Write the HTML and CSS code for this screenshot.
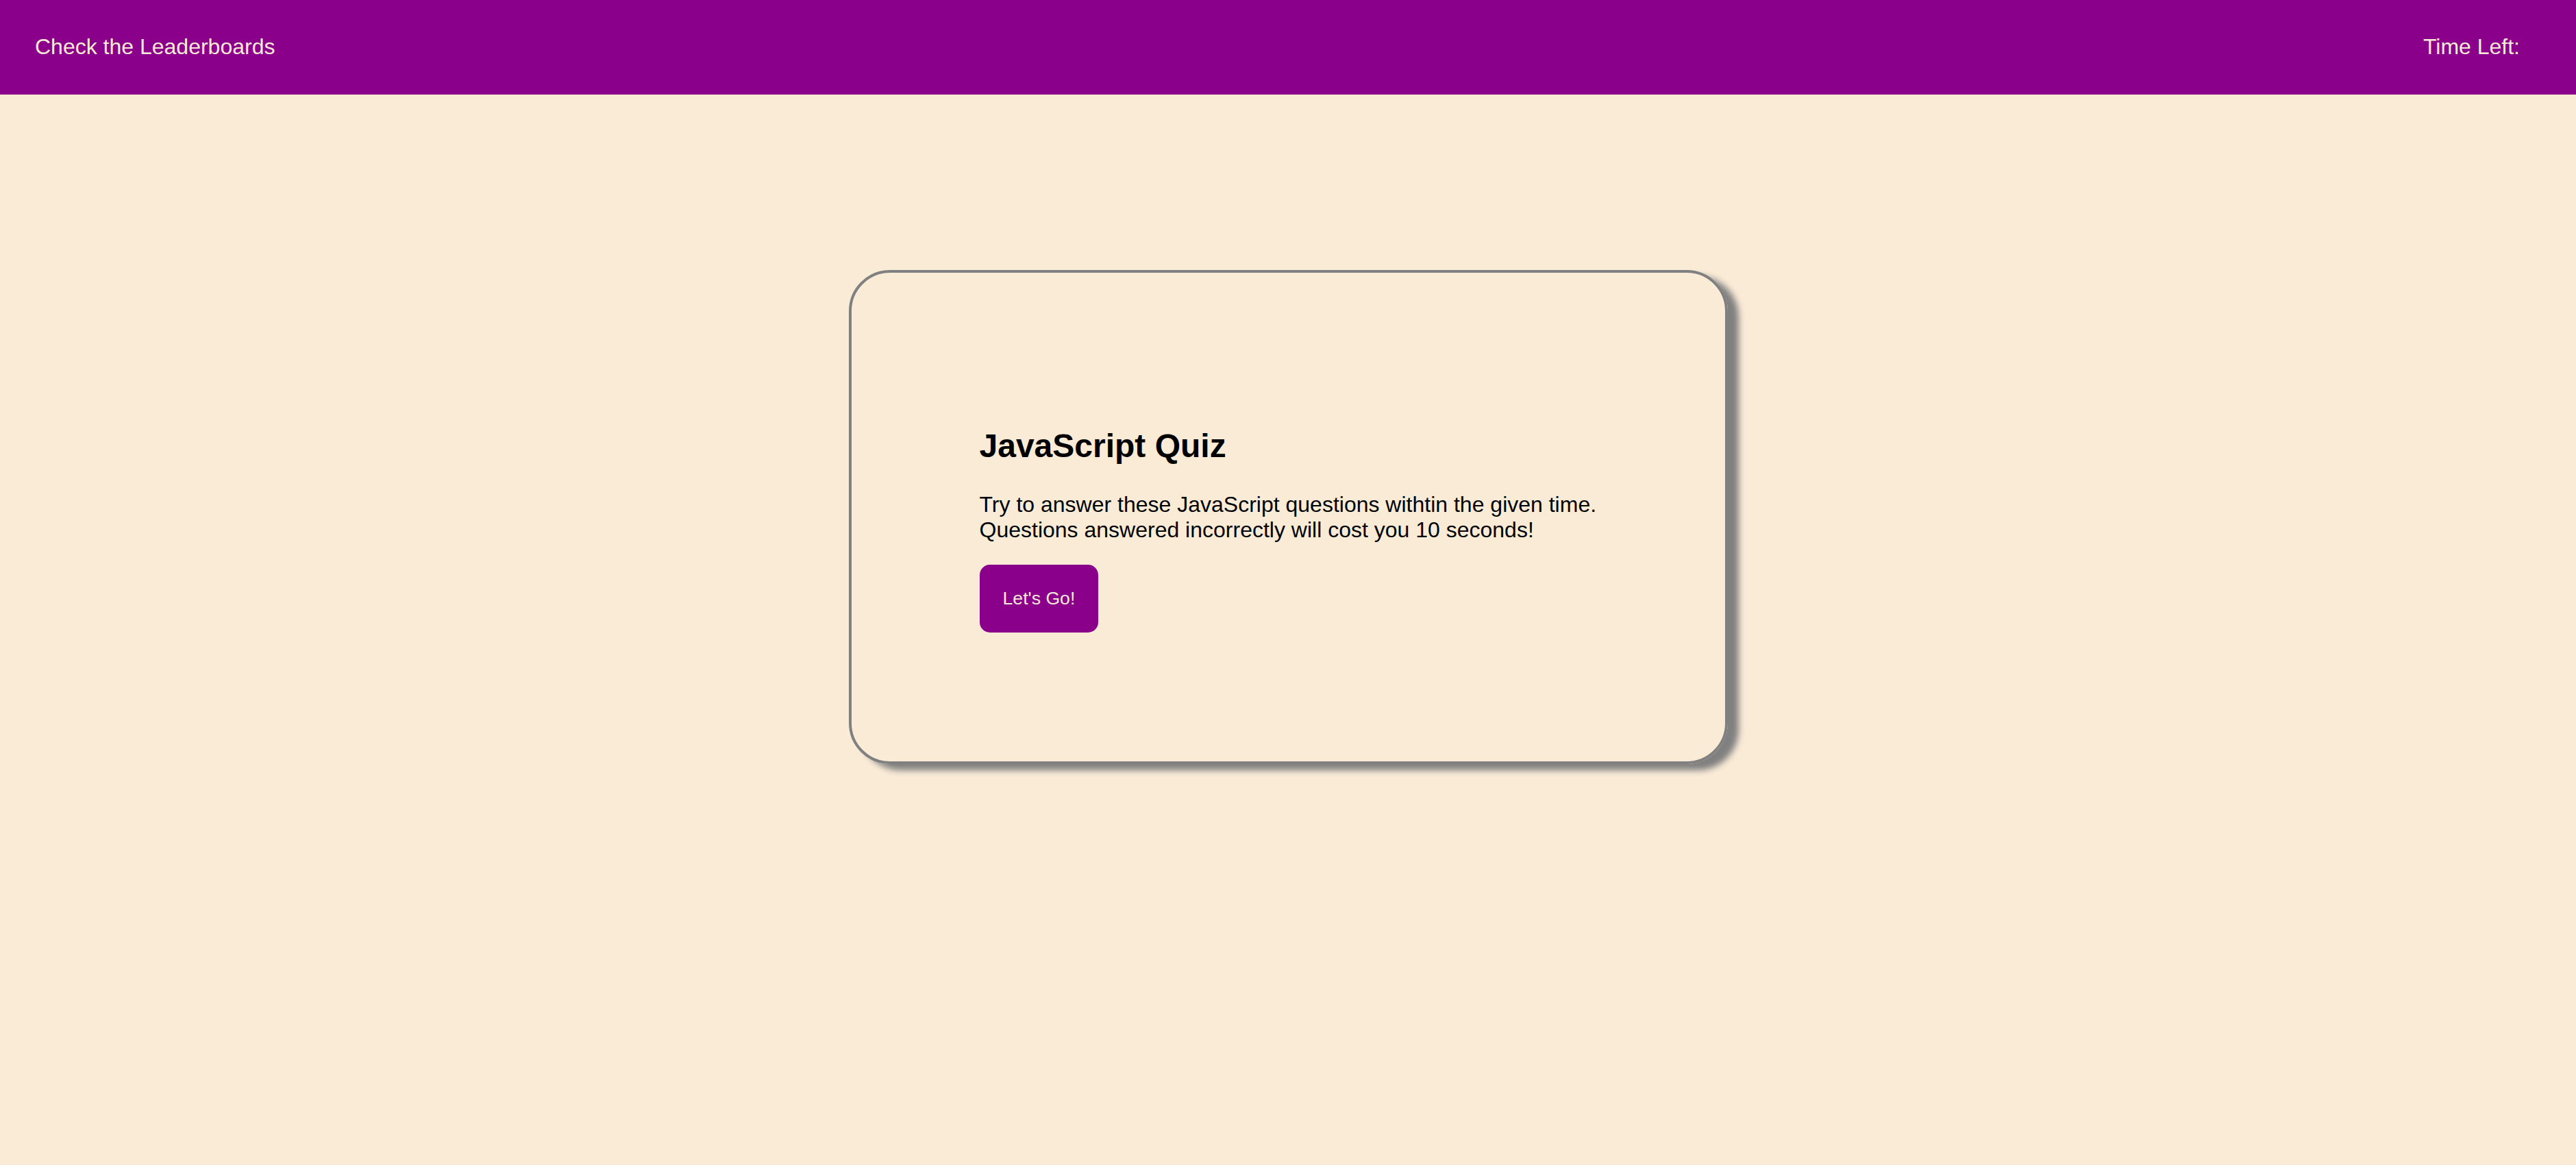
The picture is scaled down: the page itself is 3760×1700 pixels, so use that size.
FILE: index.html
```html
<!DOCTYPE html>
<html lang="en">
<head>
<meta charset="utf-8">
<title>JavaScript Quiz</title>
<link rel="stylesheet" href="styles.css">
</head>
<body>
<header class="topbar">
  <a class="leaderboard-link" href="#">Check the Leaderboards</a>
  <div class="timer">Time Left:<span class="timer-value"></span></div>
</header>
<main class="main">
  <section class="card">
    <div class="card-content">
      <h2 class="title">JavaScript Quiz</h2>
      <p class="intro">Try to answer these JavaScript questions withtin the given time.<br>Questions answered incorrectly will cost you 10 seconds!</p>
      <button class="start-btn" type="button">Let's Go!</button>
    </div>
  </section>
</main>
</body>
</html>
```

FILE: styles.css
```css
html, body {
  margin: 0;
  padding: 0;
}

body {
  background: #FAEBD7;
  font-family: "Liberation Sans", Arial, sans-serif;
  color: #000;
  min-height: 1700px;
}

.topbar {
  height: 137.6px;
  background: #8B008B;
  display: flex;
  align-items: center;
  justify-content: space-between;
  padding: 0 82px 0 51px;
  box-sizing: border-box;
}

.leaderboard-link {
  color: #FAEBD7;
  text-decoration: none;
  font-size: 32px;
}

.timer {
  color: #FAEBD7;
  font-size: 32px;
}

.main {
  display: flex;
  justify-content: center;
  padding-top: 256.4px;
}

.card {
  width: 1283px;
  box-sizing: border-box;
  border: 4px solid #808080;
  border-radius: 60px;
  box-shadow: 16px 9px 10px #808080;
  padding: 185px 188px 188px 187px;
}

.card-content {
  display: flow-root;
}

.title {
  font-size: 48px;
  font-weight: bold;
  margin: 40px 0 40px 0;
}

.intro {
  font-size: 32px;
  margin: 0 0 32px 0;
  white-space: nowrap;
}

.start-btn {
  display: block;
  background: #8B008B;
  color: #FAEBD7;
  border: none;
  border-radius: 15px;
  font-family: "Liberation Sans", Arial, sans-serif;
  font-size: 26.67px;
  padding: 34px 34px;
  line-height: normal;
  cursor: pointer;
}
```
